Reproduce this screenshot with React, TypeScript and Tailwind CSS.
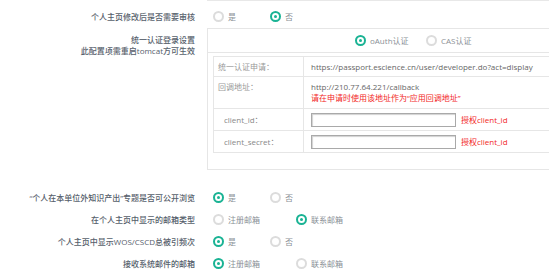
import React from "react";

const FONT = { fontFamily: '"Open Sans", "Noto Sans CJK SC", sans-serif' };

function Radio({ checked, label, width }: { checked?: boolean; label: string; width?: string }) {
  return (
    <div className={`flex items-center shrink-0 ${width ?? ""}`}>
      {checked ? (
        <span className="w-[11px] h-[11px] rounded-full border-2 border-[#1ab394] flex items-center justify-center shrink-0">
          <span className="w-[3px] h-[3px] rounded-full bg-[#1ab394]" />
        </span>
      ) : (
        <span className="w-[11px] h-[11px] rounded-full border-2 border-[#dcdcdc] shrink-0" />
      )}
      <span className="ml-[4px] text-[#8a8f96] whitespace-nowrap">{label}</span>
    </div>
  );
}

function Row({ label, children }: { label: React.ReactNode; children: React.ReactNode }) {
  return (
    <div className="flex items-center h-[22px]">
      <div className="w-[195px] shrink-0 text-right font-medium text-[#56606b] whitespace-nowrap">{label}</div>
      <div className="ml-[18px] flex items-center">{children}</div>
    </div>
  );
}

function InputCell() {
  return (
    <div className="flex items-center">
      <div className="w-[145px] h-[14px] shrink-0 border border-[#a9a9a9] bg-white shadow-[inset_1px_1px_1px_rgba(0,0,0,0.18)]" />
      <span className="ml-[5px] text-[#f22626] whitespace-nowrap">授权client_id</span>
    </div>
  );
}

export default function App() {
  return (
    <div className="w-[549px] h-[275px] bg-white overflow-hidden text-[8px] leading-[11px]" style={FONT}>
      <div className="h-px bg-[#e8e8e8] ml-[207px]" />
      <div className="flex items-center h-[27px] pt-[4px]">
        <div className="w-[195px] shrink-0 text-right font-medium text-[#56606b] whitespace-nowrap">个人主页修改后是否需要审核</div>
        <div className="ml-[18px] flex items-center">
          <Radio label="是" width="w-[57px]" />
          <Radio checked label="否" />
        </div>
      </div>

      <div className="flex items-start">
        <div className="w-[195px] shrink-0 text-right font-medium text-[#56606b] whitespace-nowrap pt-[6px]">
          <div>统一认证登录设置</div>
          <div>此配置项需重启tomcat方可生效</div>
        </div>
        <div className="ml-[12px] w-[360px] shrink-0 border border-[#e6e6e6] pb-[16px]">
          <div className="h-[24px] border-b border-[#e6e6e6] flex items-center pl-[147px]">
            <Radio checked label="oAuth认证" width="w-[71px]" />
            <Radio label="CAS认证" />
          </div>
          <table className="mt-[3px] ml-[5px] w-[349px] table-fixed border-collapse text-[#666]">
            <colgroup>
              <col className="w-[90px]" />
              <col />
            </colgroup>
            <tbody>
              <tr className="h-[20px]">
                <td className="border border-[#e6e6e6] pl-[4px] text-[#999] whitespace-nowrap">统一认证申请：</td>
                <td className="border border-[#e6e6e6] pl-[7px] whitespace-nowrap">https://passport.escience.cn/user/developer.do?act=display</td>
              </tr>
              <tr className="h-[32px]">
                <td className="border border-[#e6e6e6] pl-[4px] text-[#999] align-top pt-[4px]">回调地址：</td>
                <td className="border border-[#e6e6e6] pl-[7px] align-top pt-[4px] whitespace-nowrap">
                  <div>http://210.77.64.221/callback</div>
                  <div className="text-[#f22626]">请在申请时使用该地址作为“应用回调地址”</div>
                </td>
              </tr>
              <tr className="h-[22px]">
                <td className="border border-[#e6e6e6] pl-[10px] text-[#888] whitespace-nowrap">client_id：</td>
                <td className="border border-[#e6e6e6] pl-[7px]">
                  <InputCell />
                </td>
              </tr>
              <tr className="h-[22px]">
                <td className="border border-[#e6e6e6] pl-[10px] text-[#888] whitespace-nowrap">client_secret：</td>
                <td className="border border-[#e6e6e6] pl-[7px]">
                  <InputCell />
                </td>
              </tr>
            </tbody>
          </table>
        </div>
      </div>

      <div className="mt-[16px]">
        <Row label="“个人在本单位外知识产出”专题是否可公开浏览">
          <Radio checked label="是" width="w-[57px]" />
          <Radio label="否" />
        </Row>
        <Row label="在个人主页中显示的邮箱类型">
          <Radio label="注册邮箱" width="w-[83px]" />
          <Radio checked label="联系邮箱" />
        </Row>
        <Row label="个人主页中显示WOS/CSCD总被引频次">
          <Radio checked label="是" width="w-[57px]" />
          <Radio label="否" />
        </Row>
        <Row label="接收系统邮件的邮箱">
          <Radio checked label="注册邮箱" width="w-[83px]" />
          <Radio label="联系邮箱" />
        </Row>
      </div>
    </div>
  );
}
